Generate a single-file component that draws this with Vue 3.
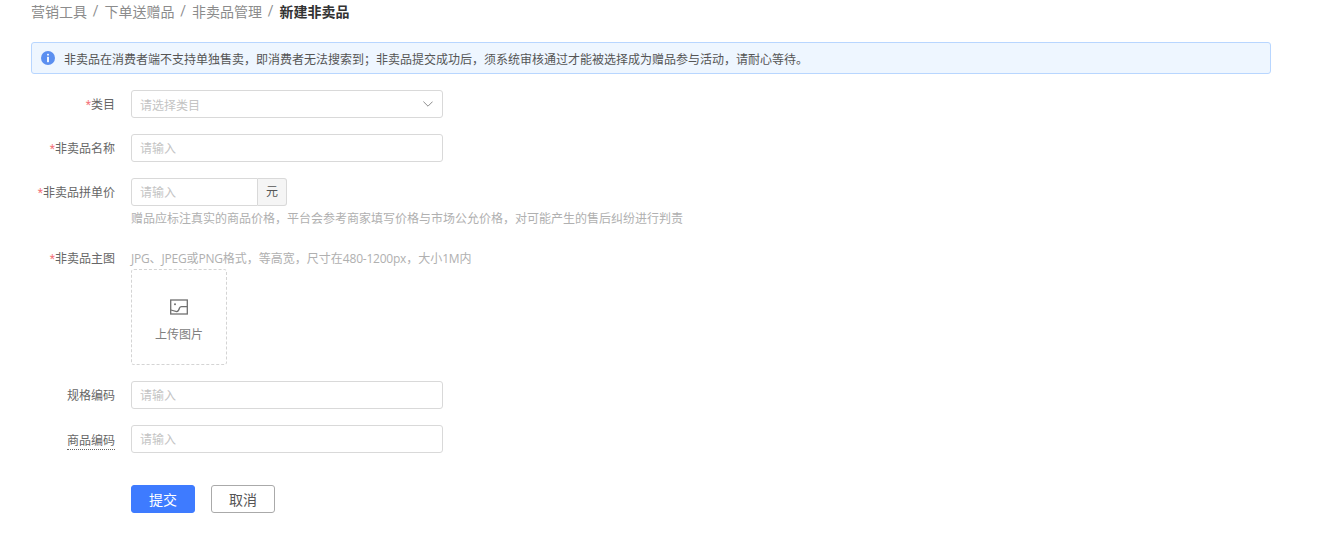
<script setup>
const crumbs = ['营销工具', '下单送赠品', '非卖品管理']
</script>

<template>
  <div class="page">
    <nav class="crumbs">
      <template v-for="c in crumbs" :key="c">
        <span class="crumb">{{ c }}</span><span class="sep">/</span>
      </template>
      <span class="crumb current">新建非卖品</span>
    </nav>

    <div class="alert">
      <svg class="info" width="14" height="14" viewBox="0 0 14 14">
        <circle cx="7" cy="7" r="7" fill="#5b8ff0" />
        <rect x="6.1" y="2.8" width="1.8" height="1.8" rx=".5" fill="#fff" />
        <rect x="6.1" y="5.7" width="1.8" height="5.5" rx=".4" fill="#fff" />
      </svg>
      <span>非卖品在消费者端不支持单独售卖，即消费者无法搜索到；非卖品提交成功后，须系统审核通过才能被选择成为赠品参与活动，请耐心等待。</span>
    </div>

    <form class="form" @submit.prevent>
      <div class="row">
        <label class="label"><i>*</i>类目</label>
        <div class="control select">
          <span>请选择类目</span>
          <svg width="10" height="6" viewBox="0 0 10 6" fill="none" stroke="#8c8c8c" stroke-width="1">
            <path d="M.4.6 5 5.2 9.6.6" />
          </svg>
        </div>
      </div>

      <div class="row">
        <label class="label"><i>*</i>非卖品名称</label>
        <input class="control" placeholder="请输入" />
      </div>

      <div class="row price-row">
        <label class="label"><i>*</i>非卖品拼单价</label>
        <div class="stack">
          <div class="group">
            <input class="control price" placeholder="请输入" />
            <span class="unit">元</span>
          </div>
          <p class="help price-help">赠品应标注真实的商品价格，平台会参考商家填写价格与市场公允价格，对可能产生的售后纠纷进行判责</p>
        </div>
      </div>

      <div class="row image-row">
        <label class="label image-label"><i>*</i>非卖品主图</label>
        <div class="stack">
          <p class="help image-help"><span class="lat">JPG</span>、<span class="lat">JPEG</span>或<span class="lat">PNG</span>格式，等高宽，尺寸在<span class="lat">480-1200px</span>，大小<span class="lat">1M</span>内</p>
          <div class="upload">
            <svg width="18" height="16" viewBox="0 0 18 16" fill="none" stroke="#707070" stroke-width="1.3">
              <rect x=".7" y="1" width="16.6" height="14" />
              <path d="M.8 11 6.7 12.7Q8.5 12.5 9.5 9 10 7.7 11.5 7.7H17.2" />
              <circle cx="5" cy="5.3" r="1" fill="#707070" stroke="none" />
            </svg>
            <span>上传图片</span>
          </div>
        </div>
      </div>

      <div class="row">
        <label class="label">规格编码</label>
        <input class="control" placeholder="请输入" />
      </div>

      <div class="row">
        <label class="label code-label"><span class="dotted">商品编码</span></label>
        <input class="control" placeholder="请输入" />
      </div>

      <div class="actions">
        <button type="button" class="btn primary">提交</button>
        <button type="button" class="btn">取消</button>
      </div>
    </form>
  </div>
</template>

<style>
html, body { background: #fff; }
</style>

<style scoped>
.page {
  box-sizing: border-box;
  width: 1340px;
  height: 553px;
  padding: 0 0 0 31px;
  overflow: hidden;
  font-family: Roboto, "Noto Sans CJK SC", sans-serif;
  font-size: 12px;
  color: #333;
}
.crumbs {
  display: flex;
  align-items: center;
  height: 22px;
  font-size: 14px;
  color: #8c8c8c;
}
.sep { width: 17.5px; text-align: center; }
.current { font-weight: 700; color: #333; }
.alert {
  box-sizing: border-box;
  display: flex;
  align-items: center;
  gap: 9px;
  width: 1240px;
  height: 32px;
  margin-top: 20px;
  padding: 0 9px;
  background: #eef6ff;
  border: 1px solid #b8d6ff;
  border-radius: 3px;
  font-size: 12px;
  color: #555;
}
.info { flex: none; }
.form { margin-top: 16px; }
.row { display: flex; align-items: flex-start; margin-bottom: 16px; }
.label {
  flex: none;
  box-sizing: border-box;
  width: 84px;
  height: 28px;
  margin-right: 16px;
  line-height: 30px;
  text-align: right;
  white-space: nowrap;
  color: #666;
}
.label i { font-style: normal; color: #f5737a; }
.control {
  box-sizing: border-box;
  width: 312px;
  height: 28px;
  padding: 2px 8px 0;
  border: 1px solid #d9d9d9;
  border-radius: 3px;
  background: #fff;
  font: inherit;
  outline: none;
}
.control::placeholder { color: #c4c4c4; opacity: 1; }
.select {
  display: flex;
  align-items: center;
  justify-content: space-between;
  padding: 0 9px 0 8px;
  color: #c4c4c4;
}
.stack { display: flex; flex-direction: column; }
.group { display: flex; }
.price {
  width: 127px;
  border-radius: 3px 0 0 3px;
}
.unit {
  box-sizing: border-box;
  width: 29px;
  height: 28px;
  line-height: 26px;
  text-align: center;
  background: #f5f5f5;
  border: 1px solid #d9d9d9;
  border-left: 0;
  border-radius: 0 3px 3px 0;
  color: #555;
}
.help { margin: 0; color: #b0b0b0; line-height: 16px; }
.lat { font-family: "Open Sans", sans-serif; letter-spacing: -.22px; }
.price-help { margin-top: 5px; }
.price-row { margin-bottom: 23px; }
.image-label { height: 16px; line-height: 18px; }
.image-help { padding-top: 1px; }
.upload {
  box-sizing: border-box;
  width: 96px;
  height: 96px;
  margin-top: 2px;
  display: flex;
  flex-direction: column;
  align-items: center;
  padding-top: 29px;
  gap: 10px;
  border: 1px dashed #d4d4d4;
  border-radius: 3px;
  color: #808080;
}
.code-label { line-height: 32px; }
.dotted { display: inline-block; line-height: 15px; border-bottom: 1px dotted #666; }
.actions { display: flex; gap: 16px; margin: 32px 0 0 100px; }
.btn {
  box-sizing: border-box;
  width: 64px;
  height: 28px;
  padding: 0;
  border: 1px solid #aaa;
  border-radius: 3px;
  background: #fff;
  font: inherit;
  font-size: 14px;
  color: #555;
}
.primary { background: #3e7bff; border-color: #3e7bff; color: #fff; }
</style>
